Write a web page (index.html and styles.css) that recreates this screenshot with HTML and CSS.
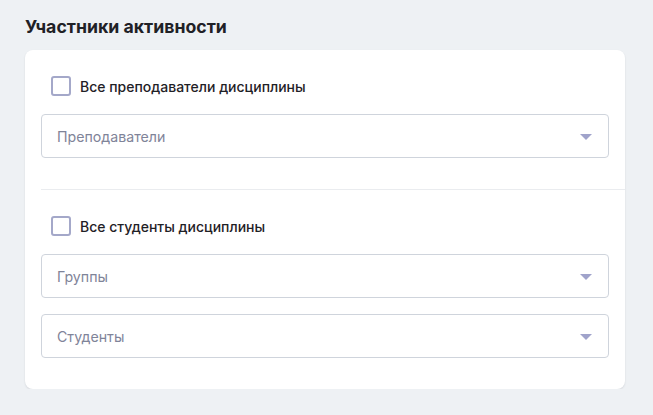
FILE: index.html
```html
<!DOCTYPE html>
<html lang="ru">
<head>
<meta charset="utf-8">
<link rel="stylesheet" href="styles.css">
</head>
<body>
<div class="page">
  <h2 class="title">Участники активности</h2>
  <div class="card">
    <div class="section section-first">
      <label class="check-row">
        <span class="checkbox"></span>
        <span class="check-label">Все преподаватели дисциплины</span>
      </label>
      <div class="select">
        <span class="placeholder">Преподаватели</span>
        <span class="caret"></span>
      </div>
    </div>
    <div class="divider"></div>
    <div class="section section-last">
      <label class="check-row">
        <span class="checkbox"></span>
        <span class="check-label">Все студенты дисциплины</span>
      </label>
      <div class="select">
        <span class="placeholder">Группы</span>
        <span class="caret"></span>
      </div>
      <div class="select select-gap">
        <span class="placeholder">Студенты</span>
        <span class="caret"></span>
      </div>
    </div>
  </div>
</div>
</body>
</html>
```

FILE: styles.css
```css
html, body {
  margin: 0;
  padding: 0;
  background: #eef1f4;
  font-family: Inter, "Noto Sans", "Liberation Sans", sans-serif;
}
.page {
  padding: 14px 28px 0 25px;
}
.title {
  margin: 0;
  font-size: 17.7px;
  font-weight: 700;
  line-height: 26px;
  color: #1f2126;
  height: 36px;
}
.card {
  width: 600px;
  background: #fff;
  border-radius: 8px;
  box-shadow: 0 1px 2px rgba(30, 40, 60, 0.12);
}
.section {
  display: flex;
  flex-direction: column;
  padding: 16px 16px 0 16px;
}
.section-first {
  padding-bottom: 31px;
}
.section-last {
  padding-bottom: 31px;
}
.check-row {
  display: flex;
  align-items: center;
  height: 40px;
  padding-left: 10px;
  gap: 9px;
  margin-bottom: 8px;
}
.checkbox {
  width: 16px;
  height: 16px;
  border: 2px solid #a4a8c9;
  border-radius: 3px;
  box-sizing: content-box;
}
.check-label {
  font-size: 14px;
  color: #1f2126;
  font-weight: 500;
}
.select {
  display: flex;
  align-items: center;
  justify-content: space-between;
  height: 42px;
  border: 1px solid #cfd4dc;
  border-radius: 4px;
  padding: 0 16px 0 15px;
}
.select-gap {
  margin-top: 16px;
}
.placeholder {
  font-size: 14.2px;
  color: #7f8499;
}
.caret {
  width: 0;
  height: 0;
  border-left: 6px solid transparent;
  border-right: 6px solid transparent;
  border-top: 6px solid #a0a3cb;
  margin-top: 2px;
}
.divider {
  height: 1px;
  background: #eaecef;
  margin-left: 16px;
}
```
